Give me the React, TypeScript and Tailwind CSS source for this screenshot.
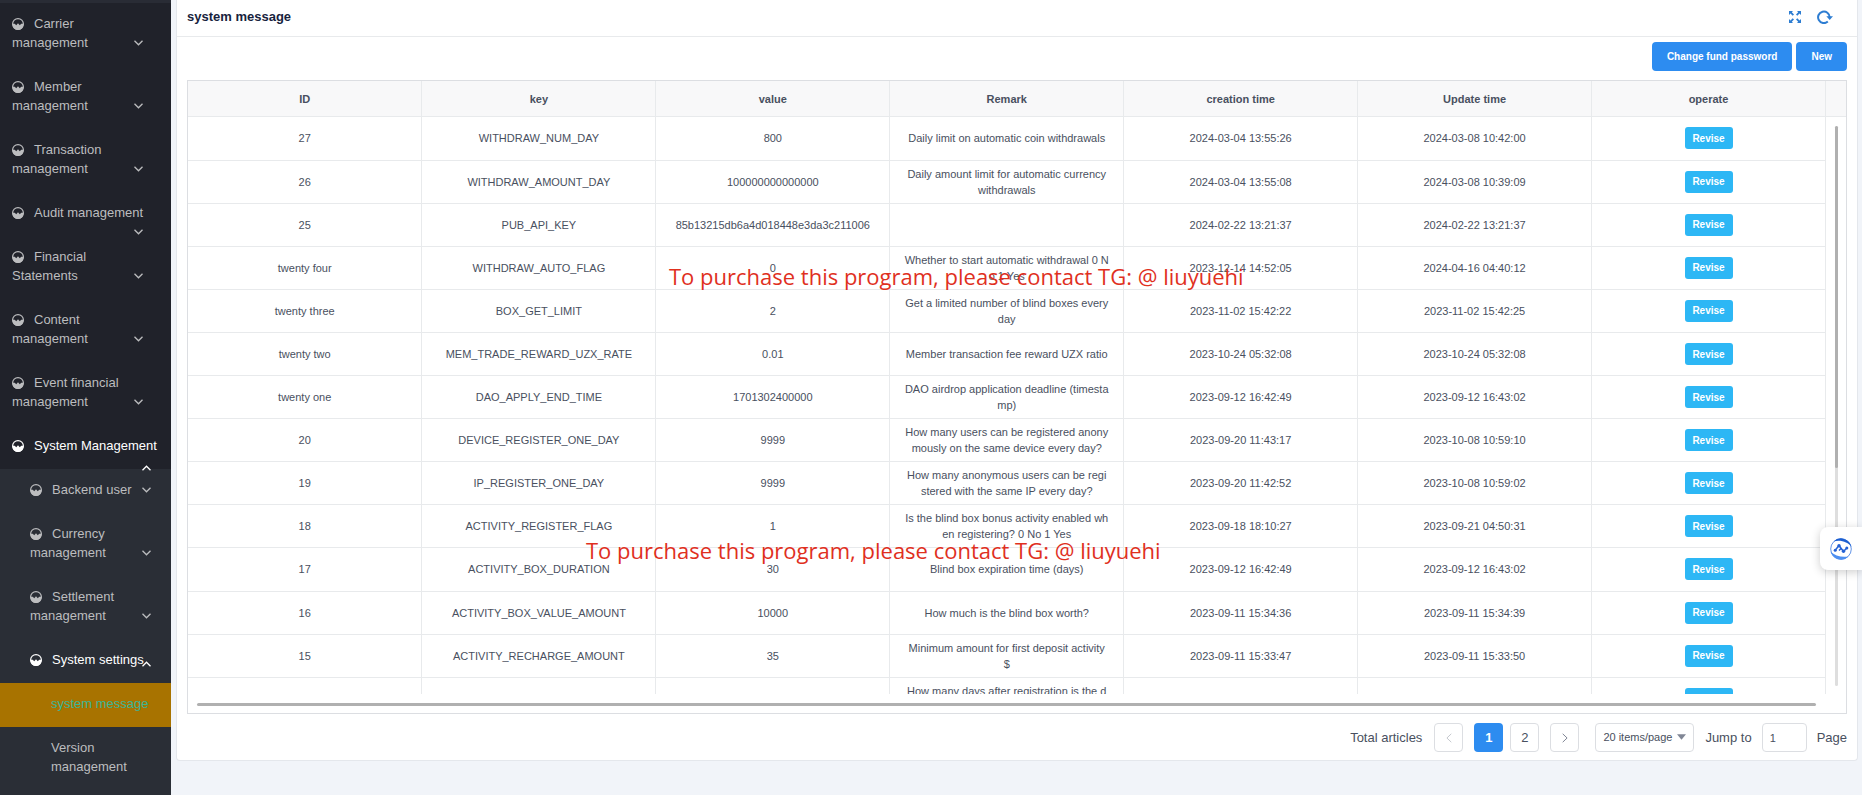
import React, { useState } from "react";

type MenuItem = {
  label: string;
  open?: boolean;
  single?: boolean;
  arrow: string;
};

const topItems: MenuItem[] = [
  { label: "Carrier management", arrow: "right-7 bottom-5" },
  { label: "Member management", arrow: "right-7 bottom-5" },
  { label: "Transaction management", arrow: "right-7 bottom-5" },
  { label: "Audit management", single: true, arrow: "right-7 bottom-px" },
  { label: "Financial Statements", arrow: "right-7 bottom-5" },
  { label: "Content management", arrow: "right-7 bottom-5" },
  { label: "Event financial management", arrow: "right-7 bottom-5" },
  { label: "System Management", single: true, open: true, arrow: "right-5 -bottom-0.5" },
];

const subItems: MenuItem[] = [
  { label: "Backend user", single: true, arrow: "right-5 bottom-5" },
  { label: "Currency management", arrow: "right-5 bottom-5" },
  { label: "Settlement management", arrow: "right-5 bottom-5" },
  { label: "System settings", single: true, open: true, arrow: "right-5 bottom-4" },
];

const columns = ["ID", "key", "value", "Remark", "creation time", "Update time", "operate"];

const rows: string[][] = [
  ["27", "WITHDRAW_NUM_DAY", "800", "Daily limit on automatic coin withdrawals", "2024-03-04 13:55:26", "2024-03-08 10:42:00"],
  ["26", "WITHDRAW_AMOUNT_DAY", "100000000000000", "Daily amount limit for automatic currency\nwithdrawals", "2024-03-04 13:55:08", "2024-03-08 10:39:09"],
  ["25", "PUB_API_KEY", "85b13215db6a4d018448e3da3c211006", "", "2024-02-22 13:21:37", "2024-02-22 13:21:37"],
  ["twenty four", "WITHDRAW_AUTO_FLAG", "0", "Whether to start automatic withdrawal 0 N\no 1 Yes", "2023-12-14 14:52:05", "2024-04-16 04:40:12"],
  ["twenty three", "BOX_GET_LIMIT", "2", "Get a limited number of blind boxes every\nday", "2023-11-02 15:42:22", "2023-11-02 15:42:25"],
  ["twenty two", "MEM_TRADE_REWARD_UZX_RATE", "0.01", "Member transaction fee reward UZX ratio", "2023-10-24 05:32:08", "2023-10-24 05:32:08"],
  ["twenty one", "DAO_APPLY_END_TIME", "1701302400000", "DAO airdrop application deadline (timesta\nmp)", "2023-09-12 16:42:49", "2023-09-12 16:43:02"],
  ["20", "DEVICE_REGISTER_ONE_DAY", "9999", "How many users can be registered anony\nmously on the same device every day?", "2023-09-20 11:43:17", "2023-10-08 10:59:10"],
  ["19", "IP_REGISTER_ONE_DAY", "9999", "How many anonymous users can be regi\nstered with the same IP every day?", "2023-09-20 11:42:52", "2023-10-08 10:59:02"],
  ["18", "ACTIVITY_REGISTER_FLAG", "1", "Is the blind box bonus activity enabled wh\nen registering? 0 No 1 Yes", "2023-09-18 18:10:27", "2023-09-21 04:50:31"],
  ["17", "ACTIVITY_BOX_DURATION", "30", "Blind box expiration time (days)", "2023-09-12 16:42:49", "2023-09-12 16:43:02"],
  ["16", "ACTIVITY_BOX_VALUE_AMOUNT", "10000", "How much is the blind box worth?", "2023-09-11 15:34:36", "2023-09-11 15:34:39"],
  ["15", "ACTIVITY_RECHARGE_AMOUNT", "35", "Minimum amount for first deposit activity\n$", "2023-09-11 15:33:47", "2023-09-11 15:33:50"],
  ["", "", "", "How many days after registration is the d\n\u00a0", "", ""],
];

function GaugeIcon() {
  return (
    <svg viewBox="0 0 24 24" className="mr-2.5 inline-block size-3 -translate-y-px align-middle" aria-hidden="true">
      <circle cx="12" cy="12" r="10.8" fill="none" stroke="currentColor" strokeWidth="2.400" />
      <path d="M1 11.500h4.500L8.500 14.500 12 10.500l3.500 4 3-3H23V13a11 11 0 0 1-22 0z" fill="currentColor" />
    </svg>
  );
}

function Chevron({ up, className }: { up?: boolean; className: string }) {
  return (
    <svg viewBox="0 0 9 6" className={`absolute z-10 h-1.5 w-[9px] ${className}`} aria-hidden="true">
      <path d={up ? "M.5 5.200 4.500 1.200l4 4" : "M.5.8l4 4 4-4"} fill="none" stroke="currentColor" strokeWidth="1.300" />
    </svg>
  );
}

function NavItem({ item, sub }: { item: MenuItem; sub?: boolean }) {
  const indent = sub ? "pl-[30px]" : "pl-3";
  const wrap = item.single ? "whitespace-nowrap" : "";
  const color = item.open ? "text-white" : "text-[#bcbdbf]";
  return (
    <li className="relative">
      <button type="button" aria-expanded={!!item.open} className={`block w-full pt-[11px] pr-5 pb-3.5 text-left ${indent} ${wrap} ${color}`}>
        <GaugeIcon />
        {item.label}
        <Chevron up={item.open} className={item.arrow} />
      </button>
    </li>
  );
}

function ExpandIcon() {
  return (
    <svg viewBox="0 0 12 12" className="size-3" fill="#2d7dd2" aria-hidden="true">
      <path d="M0 0h4L2.800 1.200l2.200 2.200-1.300 1.300-2.200-2.200L0 4zM12 0v4l-1.500-1.500-2.200 2.200L7 3.400l2.200-2.200L8 0zM0 12V8l1.500 1.500 2.200-2.200L5 8.600l-2.200 2.200L4 12zM12 12H8l1.200-1.200L7 8.600l1.300-1.300 2.200 2.200L12 8z" />
    </svg>
  );
}

function ReloadIcon() {
  return (
    <svg viewBox="0 0 16 14" className="h-3.5 w-4" aria-hidden="true">
      <path d="M10.800 11.600A5.800 5.800 0 1 1 12.700 7.200" fill="none" stroke="#2d7dd2" strokeWidth="2" />
      <path d="M9.300 6.200H16L12.700 10z" fill="#2d7dd2" />
    </svg>
  );
}

function AssistantLogo() {
  return (
    <svg viewBox="0 0 22 22" className="size-[22px]" aria-hidden="true">
      <circle cx="11" cy="11" r="10.300" fill="#fff" stroke="#3b78e0" strokeWidth="0.800" />
      <path d="M3.500 3.500A10.700 10.700 0 0 1 21.500 9C18 4 10.500 1.500 3.500 3.500z" fill="#1d5fd0" />
      <path d="M.6 13.500c4 4.500 11 6 18 5A10.700 10.700 0 0 1 .6 13.500z" fill="#4d8ff0" />
      <path d="M5.200 12.300 9 7.500l4.500 6 3.300-3.500M9 12.500l2.500-2.500" fill="none" stroke="#2361d4" strokeWidth="1.500" strokeLinejoin="round" />
      <circle cx="5.200" cy="12.300" r="1.500" fill="#2361d4" />
      <circle cx="9" cy="7.800" r="1.700" fill="#2361d4" />
      <circle cx="13.500" cy="13.300" r="1.700" fill="#2361d4" />
      <circle cx="16.800" cy="10" r="1.500" fill="#2361d4" />
    </svg>
  );
}

function Columns() {
  return (
    <colgroup>
      {columns.map((c) => (
        <col key={c} />
      ))}
    </colgroup>
  );
}

const pageButton = "flex size-[29px] items-center justify-center rounded-[4px] border border-[#dcdee2] bg-white";

export default function App() {
  const [size, setSize] = useState("20");
  const [jump, setJump] = useState("1");
  return (
    <div className="relative flex h-screen overflow-hidden bg-[#f1f4f9] font-['Liberation_Sans',Arial,sans-serif] text-[11px] text-[#495060]">
      <nav className="w-[171px] shrink-0 overflow-hidden bg-[#2a2e36] text-[13px] leading-[19px] text-[#bcbdbf]">
        <ul className="border-t-[3px] border-[#292c35] bg-[#20222a]">
          {topItems.map((item) => (
            <NavItem key={item.label} item={item} />
          ))}
        </ul>
        <ul>
          {subItems.map((item) => (
            <NavItem key={item.label} item={item} sub />
          ))}
          <li>
            <a href="#system-message" className="block bg-[#a87300] pt-[11px] pr-4 pb-3.5 pl-[51px] text-[#3bb596]">
              system message
            </a>
          </li>
          <li>
            <a href="#version" className="block pt-[11px] pr-4 pb-3.5 pl-[51px]">
              Version management
            </a>
          </li>
        </ul>
      </nav>

      <main className="min-w-0 flex-1 pr-1 pl-[5px]">
        <section className="rounded-b-[4px] border border-t-0 border-[#e4e7ec] bg-white">
          <header className="flex h-[37px] items-center justify-between border-b border-[#e8eaec] pr-6 pb-0.5 pl-[10px]">
            <h1 className="text-[13px] font-bold text-[#17233d]">system message</h1>
            <div className="flex items-center gap-4">
              <button type="button" aria-label="Full screen">
                <ExpandIcon />
              </button>
              <button type="button" aria-label="Reload">
                <ReloadIcon />
              </button>
            </div>
          </header>

          <div className="px-[10px] pt-[5px] pb-2">
            <div className="flex justify-end gap-1 text-[10px] font-bold text-white">
              <button type="button" className="h-[29px] rounded-[4px] bg-[#2d8cf0] px-[15px]">
                Change fund password
              </button>
              <button type="button" className="h-[29px] rounded-[4px] bg-[#2d8cf0] px-[15px]">
                New
              </button>
            </div>

            <div className="mt-[9px] border border-[#dcdee2]">
              <div className="border-b border-[#e8eaec] bg-[#f8f8f9] pr-5">
                <table className="h-[35px] w-full table-fixed border-collapse">
                  <Columns />
                  <thead>
                    <tr>
                      {columns.map((c) => (
                        <th key={c} scope="col" className="border-r border-[#e8eaec] px-0 pt-0.5 pb-0 text-center font-bold">
                          {c}
                        </th>
                      ))}
                    </tr>
                  </thead>
                </table>
              </div>
              <div className="flex h-[577px]">
                <div className="min-w-0 flex-1 overflow-hidden">
                  <table className="h-[604px] w-full table-fixed border-collapse" aria-label="system message">
                    <Columns />
                    <tbody>
                      {rows.map((r, n) => (
                        <tr key={n} className="h-[43px]">
                          {r.map((cell, i) => (
                            <td key={i} className="border-r border-b border-[#e8eaec] p-0 text-center leading-4 whitespace-pre-line">
                              {cell}
                            </td>
                          ))}
                          <td className="border-r border-b border-[#e8eaec] p-0 text-center">
                            <button type="button" className="h-[22px] w-12 rounded-[3px] bg-[#2db7f5] align-middle text-[10px] font-bold text-white">
                              Revise
                            </button>
                          </td>
                        </tr>
                      ))}
                    </tbody>
                  </table>
                </div>
                <div className="w-5 shrink-0 pt-[9px] pb-2 pl-[9px]">
                  <div className="h-full w-[3px] rounded-full bg-[#dedede]">
                    <div className="h-[61%] rounded-full bg-[#b0b0b0]" />
                  </div>
                </div>
              </div>
              <div className="pt-[9px] pr-[30px] pb-[7px] pl-[9px]">
                <div className="h-[3px] rounded-full bg-[#b0b0b0]" />
              </div>
            </div>

            <div className="mt-[9px] flex items-center justify-end text-[13px]">
              <span className="mr-3">Total articles</span>
              <button type="button" aria-label="Previous page" className={`${pageButton} mr-[11px]`}>
                <svg viewBox="0 0 6 10" className="h-2.5 w-1.5" aria-hidden="true">
                  <path d="M5.300.8.900 5l4.400 4.200" fill="none" stroke="#c5c8ce" />
                </svg>
              </button>
              <button type="button" className="mr-[7px] size-[29px] rounded-[4px] bg-[#2d8cf0] font-bold text-white">
                1
              </button>
              <button type="button" className={`${pageButton} mr-[11px]`}>
                2
              </button>
              <button type="button" aria-label="Next page" className={`${pageButton} mr-4`}>
                <svg viewBox="0 0 6 10" className="h-2.5 w-1.5" aria-hidden="true">
                  <path d="M.7.8 5.100 5 .7 9.200" fill="none" stroke="#808695" />
                </svg>
              </button>
              <div className="relative mr-[11px]">
                <select
                  aria-label="Items per page"
                  value={size}
                  onChange={(e) => setSize(e.target.value)}
                  className="h-[29px] w-[99px] appearance-none rounded-[4px] border border-[#dcdee2] bg-white pl-[7px] text-[11px]"
                >
                  <option value="20">20 items/page</option>
                  <option value="50">50 items/page</option>
                </select>
                <svg viewBox="0 0 9 6" className="pointer-events-none absolute top-[11px] right-2 h-1.5 w-[9px]" aria-hidden="true">
                  <path d="M0 .3h9L4.500 5.700z" fill="#808695" />
                </svg>
              </div>
              <label className="flex items-center">
                Jump to
                <input
                  value={jump}
                  onChange={(e) => setJump(e.target.value)}
                  className="mx-[10px] h-[29px] w-[45px] rounded-[4px] border border-[#dcdee2] px-[7px] text-[11px]"
                />
                Page
              </label>
            </div>
          </div>
        </section>
      </main>

      <p className="pointer-events-none absolute top-[260px] left-[669px] font-['Open_Sans',sans-serif] text-[22px] leading-8 whitespace-nowrap text-[#e0301e]">
        To purchase this program, please contact TG: @ liuyuehi
      </p>
      <p className="pointer-events-none absolute top-[534px] left-[586px] font-['Open_Sans',sans-serif] text-[22px] leading-8 whitespace-nowrap text-[#e0301e]">
        To purchase this program, please contact TG: @ liuyuehi
      </p>
      <button
        type="button"
        aria-label="Assistant"
        className="absolute top-[527px] right-0 flex h-[43px] w-[42px] items-center rounded-l-lg bg-white pl-[10px] shadow-[0_2px_10px_rgba(0,0,0,0.2)]"
      >
        <AssistantLogo />
      </button>
    </div>
  );
}
